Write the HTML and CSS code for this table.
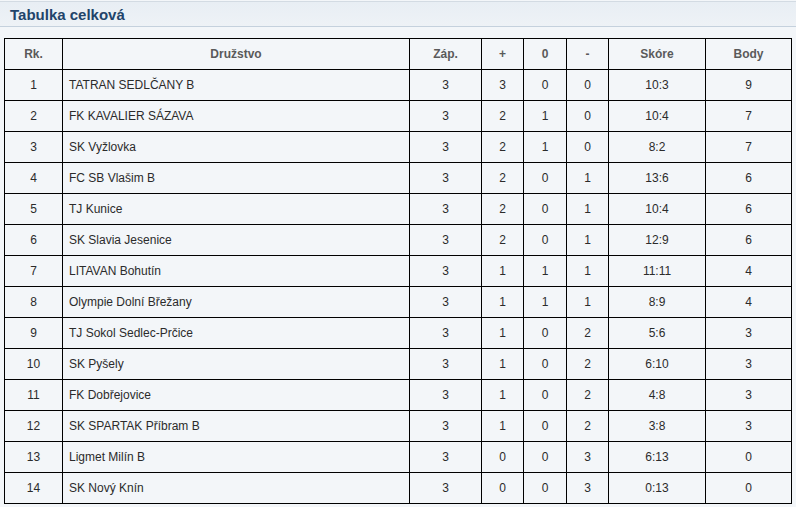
FILE: index.html
```html
<!DOCTYPE html>
<html lang="cs">
<head>
<meta charset="utf-8">
<title>Tabulka celková</title>
<link rel="stylesheet" href="styles.css">
</head>
<body>
<div class="panel-head"><h2 class="panel-title">Tabulka celková</h2></div>
<table class="standings">
<colgroup>
<col class="c-rk"><col class="c-team"><col class="c-zap"><col class="c-w"><col class="c-d"><col class="c-l"><col class="c-score"><col class="c-pts">
</colgroup>
<thead>
<tr><th>Rk.</th><th>Družstvo</th><th>Záp.</th><th>+</th><th>0</th><th>-</th><th>Skóre</th><th>Body</th></tr>
</thead>
<tbody>
<tr><td>1</td><td class="team">TATRAN SEDLČANY B</td><td>3</td><td>3</td><td>0</td><td>0</td><td>10:3</td><td>9</td></tr>
<tr><td>2</td><td class="team">FK KAVALIER SÁZAVA</td><td>3</td><td>2</td><td>1</td><td>0</td><td>10:4</td><td>7</td></tr>
<tr><td>3</td><td class="team">SK Vyžlovka</td><td>3</td><td>2</td><td>1</td><td>0</td><td>8:2</td><td>7</td></tr>
<tr><td>4</td><td class="team">FC SB Vlašim B</td><td>3</td><td>2</td><td>0</td><td>1</td><td>13:6</td><td>6</td></tr>
<tr><td>5</td><td class="team">TJ Kunice</td><td>3</td><td>2</td><td>0</td><td>1</td><td>10:4</td><td>6</td></tr>
<tr><td>6</td><td class="team">SK Slavia Jesenice</td><td>3</td><td>2</td><td>0</td><td>1</td><td>12:9</td><td>6</td></tr>
<tr><td>7</td><td class="team">LITAVAN Bohutín</td><td>3</td><td>1</td><td>1</td><td>1</td><td>11:11</td><td>4</td></tr>
<tr><td>8</td><td class="team">Olympie Dolní Břežany</td><td>3</td><td>1</td><td>1</td><td>1</td><td>8:9</td><td>4</td></tr>
<tr><td>9</td><td class="team">TJ Sokol Sedlec-Prčice</td><td>3</td><td>1</td><td>0</td><td>2</td><td>5:6</td><td>3</td></tr>
<tr><td>10</td><td class="team">SK Pyšely</td><td>3</td><td>1</td><td>0</td><td>2</td><td>6:10</td><td>3</td></tr>
<tr><td>11</td><td class="team">FK Dobřejovice</td><td>3</td><td>1</td><td>0</td><td>2</td><td>4:8</td><td>3</td></tr>
<tr><td>12</td><td class="team">SK SPARTAK Příbram B</td><td>3</td><td>1</td><td>0</td><td>2</td><td>3:8</td><td>3</td></tr>
<tr><td>13</td><td class="team">Ligmet Milín B</td><td>3</td><td>0</td><td>0</td><td>3</td><td>6:13</td><td>0</td></tr>
<tr><td>14</td><td class="team">SK Nový Knín</td><td>3</td><td>0</td><td>0</td><td>3</td><td>0:13</td><td>0</td></tr>
</tbody>
</table>
</body>
</html>
```
FILE: styles.css
```css
html, body {
  margin: 0;
  padding: 0;
  background: #f3f6f9;
  font-family: "Liberation Sans", Arial, sans-serif;
}
body {
  padding-top: 1px;
}
.panel-head {
  height: 24px;
  border-top: 1px solid #d3dbe3;
  border-bottom: 1px solid #c5d1dd;
  background: linear-gradient(#e8eef4, #eef2f6);
  display: flex;
  align-items: center;
  padding-left: 10px;
}
.panel-title {
  margin: 0;
  font-size: 15px;
  font-weight: bold;
  color: #22446a;
}
.standings {
  margin: 11px 0 0 4px;
  border-collapse: collapse;
  table-layout: fixed;
  width: 788px;
  font-size: 12px;
  color: #2b2b2b;
}
.standings th, .standings td {
  border: 1px solid #000;
  height: 30px;
  padding: 0;
  text-align: center;
  vertical-align: middle;
}
.standings th {
  color: #5a5a5a;
  font-weight: bold;
}
.standings td.team {
  text-align: left;
  padding-left: 6px;
}
.c-rk { width: 58px; }
.c-team { width: 347px; }
.c-zap { width: 72px; }
.c-w { width: 42px; }
.c-d { width: 43px; }
.c-l { width: 42px; }
.c-score { width: 97px; }
.c-pts { width: 86px; }
```
